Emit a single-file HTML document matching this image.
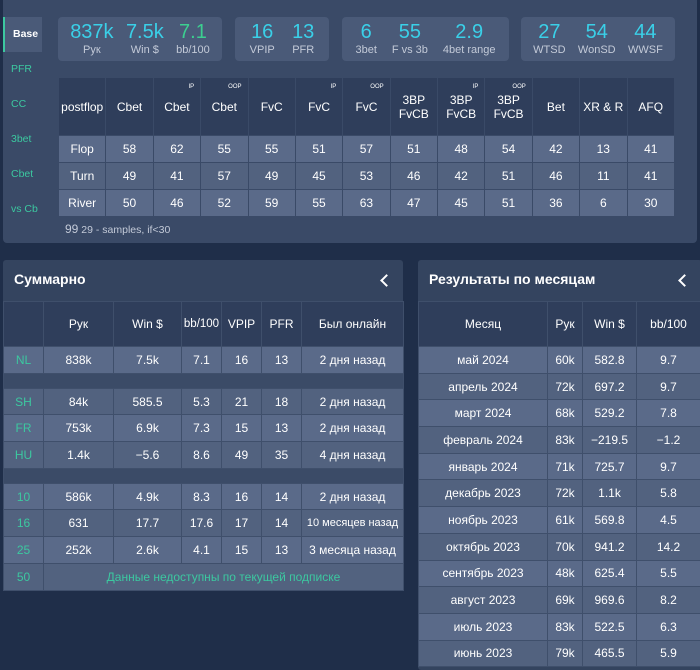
<!DOCTYPE html>
<html><head><meta charset="utf-8"><style>
*{margin:0;padding:0;box-sizing:border-box}
body{width:700px;height:668px;background:#1f2e49;font-family:"Liberation Sans","DejaVu Sans",sans-serif;color:#fff;position:relative;overflow:hidden;font-size:12px}
.abs{position:absolute}
.top{left:3px;top:0;width:694px;height:243px;background:#3a4a67;border-radius:0 0 4px 4px}
.nav{left:3px;width:40px;color:#3cc8a0;font-size:10.5px;padding-left:8px}
.box{top:17px;height:44px;background:#4a5a78;border-radius:4px;display:flex;justify-content:space-around;align-items:center;padding:0 6px}
.st{text-align:center}
.st b{display:block;font-weight:normal;font-size:20px;color:#3ad0e8;line-height:22px}
.st span{display:block;font-size:11px;color:#c3cad8;line-height:14px}
table{border-collapse:collapse;position:absolute;table-layout:fixed}
td,th{text-align:center;border:1px solid #3a4a67;font-weight:normal;color:#fff}
.t1 th{background:#2f3e5b;height:58px;font-size:12px;position:relative}
.t1 td{height:27px;font-size:12px}
sup{position:absolute;top:6px;right:6px;font-size:6px}
.r1 td{background:#5a6a89}.r2 td{background:#52627f}
.panel{background:#34445f;border-radius:3px}
h2{position:absolute;font-size:14px;font-weight:bold;color:#fff}
.t2 th{background:#2f3e5b;height:45px;font-size:12px;border-color:#3f4f6b}
.t2 td{height:26.7px;font-size:12px;border-color:#3f4f6b}
.g{color:#3cc8a0}
.gap td{background:#3b4b67;height:15px}
.chev{position:absolute;width:9px;height:9px;border-left:2px solid #fff;border-bottom:2px solid #fff;transform:rotate(45deg)}
</style></head><body>
<div class="abs top"></div>
<div class="abs" style="left:3px;top:17px;width:39px;height:35px;background:#4a5a78;border-left:2px solid #3cc8a0;font-size:10.5px;font-weight:bold;padding:11px 0 0 8px">Base</div>
<div class="abs nav" style="top:63px">PFR</div>
<div class="abs nav" style="top:98px">CC</div>
<div class="abs nav" style="top:133px">3bet</div>
<div class="abs nav" style="top:168px">Cbet</div>
<div class="abs nav" style="top:203px">vs Cb</div>

<div class="abs box" style="left:58px;width:164px"><div class="st"><b>837k</b><span>Рук</span></div><div class="st"><b>7.5k</b><span>Win $</span></div><div class="st"><b style="color:#3ccf90">7.1</b><span>bb/100</span></div></div>
<div class="abs box" style="left:235px;width:94px"><div class="st"><b>16</b><span>VPIP</span></div><div class="st"><b>13</b><span>PFR</span></div></div>
<div class="abs box" style="left:342px;width:167px"><div class="st"><b>6</b><span>3bet</span></div><div class="st"><b>55</b><span>F vs 3b</span></div><div class="st"><b>2.9</b><span>4bet range</span></div></div>
<div class="abs box" style="left:521px;width:154px"><div class="st"><b>27</b><span>WTSD</span></div><div class="st"><b>54</b><span>WonSD</span></div><div class="st"><b>44</b><span>WWSF</span></div></div>

<table class="t1" style="left:58px;top:77px;width:617px">
<tr><th>postflop</th><th>Cbet</th><th>Cbet<sup>IP</sup></th><th>Cbet<sup>OOP</sup></th><th>FvC</th><th>FvC<sup>IP</sup></th><th>FvC<sup>OOP</sup></th><th>3BP<br>FvCB</th><th>3BP<br>FvCB<sup>IP</sup></th><th>3BP<br>FvCB<sup>OOP</sup></th><th>Bet</th><th>XR &amp; R</th><th>AFQ</th></tr>
<tr class="r1"><td>Flop</td><td>58</td><td>62</td><td>55</td><td>55</td><td>51</td><td>57</td><td>51</td><td>48</td><td>54</td><td>42</td><td>13</td><td>41</td></tr>
<tr class="r2"><td>Turn</td><td>49</td><td>41</td><td>57</td><td>49</td><td>45</td><td>53</td><td>46</td><td>42</td><td>51</td><td>46</td><td>11</td><td>41</td></tr>
<tr class="r1"><td>River</td><td>50</td><td>46</td><td>52</td><td>59</td><td>55</td><td>63</td><td>47</td><td>45</td><td>51</td><td>36</td><td>6</td><td>30</td></tr>
</table>
<div class="abs" style="left:65px;top:222px;font-size:10.5px;color:#c3cad8"><span style="font-size:12px">99</span> 29 - samples, if&lt;30</div>

<div class="abs panel" style="left:3px;top:260px;width:400px;height:330px"></div>
<h2 style="left:14px;top:271px">Суммарно</h2>
<div class="chev" style="left:382px;top:276px"></div>
<table class="t2" style="left:3px;top:301px;width:400px">
<colgroup><col style="width:40px"><col style="width:70px"><col style="width:68px"><col style="width:40px"><col style="width:40px"><col style="width:40px"><col style="width:102px"></colgroup>
<tr><th></th><th>Рук</th><th>Win $</th><th style="font-size:11.5px">bb/100</th><th>VPIP</th><th>PFR</th><th>Был онлайн</th></tr>
<tr class="r1"><td class="g">NL</td><td>838k</td><td>7.5k</td><td>7.1</td><td>16</td><td>13</td><td>2 дня назад</td></tr>
<tr class="gap"><td colspan="7"></td></tr>
<tr class="r2"><td class="g">SH</td><td>84k</td><td>585.5</td><td>5.3</td><td>21</td><td>18</td><td>2 дня назад</td></tr>
<tr class="r1"><td class="g">FR</td><td>753k</td><td>6.9k</td><td>7.3</td><td>15</td><td>13</td><td>2 дня назад</td></tr>
<tr class="r2"><td class="g">HU</td><td>1.4k</td><td>−5.6</td><td>8.6</td><td>49</td><td>35</td><td>4 дня назад</td></tr>
<tr class="gap"><td colspan="7"></td></tr>
<tr class="r1"><td class="g">10</td><td>586k</td><td>4.9k</td><td>8.3</td><td>16</td><td>14</td><td>2 дня назад</td></tr>
<tr class="r2"><td class="g">16</td><td>631</td><td>17.7</td><td>17.6</td><td>17</td><td>14</td><td style="font-size:11px">10 месяцев назад</td></tr>
<tr class="r1"><td class="g">25</td><td>252k</td><td>2.6k</td><td>4.1</td><td>15</td><td>13</td><td>3 месяца назад</td></tr>
<tr class="r2"><td class="g">50</td><td colspan="6" class="g">Данные недоступны по текущей подписке</td></tr>
</table>

<div class="abs panel" style="left:418px;top:260px;width:284px;height:410px"></div>
<h2 style="left:429px;top:271px">Результаты по месяцам</h2>
<div class="chev" style="left:680px;top:276px"></div>
<table class="t2" style="left:418px;top:301px;width:282px">
<colgroup><col style="width:129px"><col style="width:35px"><col style="width:54px"><col style="width:64px"></colgroup>
<tr><th>Месяц</th><th>Рук</th><th>Win $</th><th>bb/100</th></tr>
<tr class="r1"><td>май 2024</td><td>60k</td><td>582.8</td><td>9.7</td></tr>
<tr class="r2"><td>апрель 2024</td><td>72k</td><td>697.2</td><td>9.7</td></tr>
<tr class="r1"><td>март 2024</td><td>68k</td><td>529.2</td><td>7.8</td></tr>
<tr class="r2"><td>февраль 2024</td><td>83k</td><td>−219.5</td><td>−1.2</td></tr>
<tr class="r1"><td>январь 2024</td><td>71k</td><td>725.7</td><td>9.7</td></tr>
<tr class="r2"><td>декабрь 2023</td><td>72k</td><td>1.1k</td><td>5.8</td></tr>
<tr class="r1"><td>ноябрь 2023</td><td>61k</td><td>569.8</td><td>4.5</td></tr>
<tr class="r2"><td>октябрь 2023</td><td>70k</td><td>941.2</td><td>14.2</td></tr>
<tr class="r1"><td>сентябрь 2023</td><td>48k</td><td>625.4</td><td>5.5</td></tr>
<tr class="r2"><td>август 2023</td><td>69k</td><td>969.6</td><td>8.2</td></tr>
<tr class="r1"><td>июль 2023</td><td>83k</td><td>522.5</td><td>6.3</td></tr>
<tr class="r2"><td>июнь 2023</td><td>79k</td><td>465.5</td><td>5.9</td></tr>
</table>
</body></html>
